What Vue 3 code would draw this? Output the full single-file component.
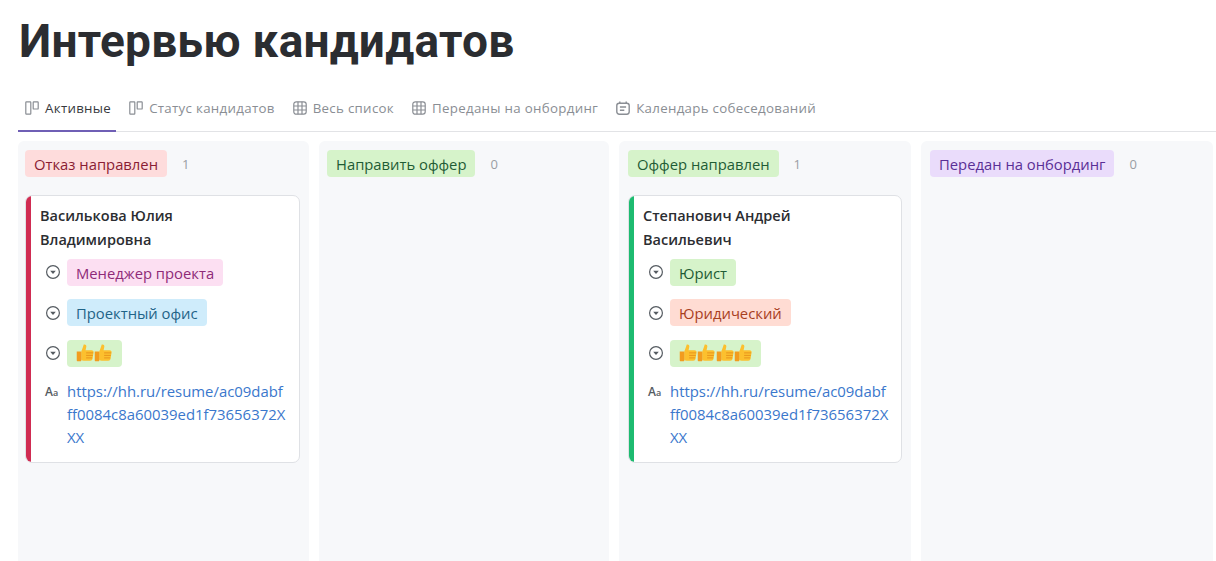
<script setup>
const tabs = [
  { label: 'Активные', icon: 'board', active: true },
  { label: 'Статус кандидатов', icon: 'board' },
  { label: 'Весь список', icon: 'table' },
  { label: 'Переданы на онбординг', icon: 'table' },
  { label: 'Календарь собеседований', icon: 'calendar' },
]
const url = 'https://hh.ru/resume/ac09dabfff0084c8a60039ed1f73656372XXX'
const columns = [
  {
    title: 'Отказ направлен', tone: 'red', count: 1,
    cards: [{ name: 'Василькова Юлия Владимировна', bar: 'bar-red', role: ['Менеджер проекта', 'pink'], dept: ['Проектный офис', 'blue'], thumbs: 2 }],
  },
  { title: 'Направить оффер', tone: 'green', count: 0, cards: [] },
  {
    title: 'Оффер направлен', tone: 'green', count: 1,
    cards: [{ name: 'Степанович Андрей Васильевич', bar: 'bar-green', role: ['Юрист', 'green'], dept: ['Юридический', 'salmon'], thumbs: 4 }],
  },
  { title: 'Передан на онбординг', tone: 'purple', count: 0, cards: [] },
]
</script>

<template>
  <div class="page">
    <h1 class="title">Интервью кандидатов</h1>
    <nav class="tabs">
      <div v-for="t in tabs" :key="t.label" class="tab" :class="{ active: t.active }">
        <svg class="tab-icon" viewBox="0 0 14 14" fill="none" stroke="currentColor" stroke-width="1.2">
          <template v-if="t.icon === 'board'">
            <rect x="0.8" y="0.8" width="5" height="12.4" rx="0.6" />
            <rect x="8.2" y="0.8" width="5" height="7.2" rx="0.6" />
          </template>
          <template v-else-if="t.icon === 'table'">
            <rect x="0.8" y="0.8" width="12.4" height="12.4" rx="2.4" />
            <path d="M0.8 5h12.4M0.8 9h12.4M5 0.8v12.4M9 0.8v12.4" />
          </template>
          <template v-else>
            <rect x="0.8" y="2.2" width="12.4" height="11" rx="2.4" stroke-width="1.4" />
            <path d="M3.8 0.6v2.4M10.2 0.6v2.4M3.9 6h6.2M3.9 9.2h4.4" stroke-width="1.4" />
          </template>
        </svg>
        <span>{{ t.label }}</span>
      </div>
    </nav>
    <div class="board">
      <section v-for="c in columns" :key="c.title" class="column">
        <header class="col-head">
          <span class="tag" :class="c.tone">{{ c.title }}</span>
          <span class="count">{{ c.count }}</span>
        </header>
        <article v-for="card in c.cards" :key="card.name" class="card">
          <div class="bar" :class="card.bar"></div>
          <div class="card-body">
            <div class="name">{{ card.name }}</div>
            <div v-for="row in [card.role, card.dept]" :key="row[0]" class="row">
              <svg class="select-icon" viewBox="0 0 16 16" fill="none">
                <circle cx="8" cy="8" r="6.4" stroke="#555b61" stroke-width="1.2" />
                <path d="M5.2 6.8h5.6L8 10z" fill="#555b61" />
              </svg>
              <span class="tag" :class="row[1]">{{ row[0] }}</span>
            </div>
            <div class="row">
              <svg class="select-icon" viewBox="0 0 16 16" fill="none">
                <circle cx="8" cy="8" r="6.4" stroke="#555b61" stroke-width="1.2" />
                <path d="M5.2 6.8h5.6L8 10z" fill="#555b61" />
              </svg>
              <span class="tag green thumbs">
                <svg v-for="n in card.thumbs" :key="n" class="thumb" viewBox="0 0 18 18">
                  <path d="M7.6 0.6c1.5-.5 2.7.4 2.6 1.9-.1 1.5-.6 2.6-.8 3.7h6c1.5 0 2.2 1 2 2.2l-1 6.4c-.2 1.3-1 2-2.3 2H7.6c-1 0-1.9-.4-2.5-1.1V7.4c1-2 1.8-4.3 2.5-6.8z" fill="#fcc02e" />
                  <path d="M0.6 7.4h3.6c.6 0 1 .4 1 1v7.8c0 .6-.4 1-1 1H1.6c-.6 0-1-.4-1-1z" fill="#f29c1f" />
                  <path d="M10 8.9h7M10 11.4h6.6M10 13.9h6" stroke="#e8941c" stroke-width="1" fill="none" />
                </svg>
              </span>
            </div>
            <div class="row link-row">
              <span class="aa">A<small>a</small></span>
              <a class="link">{{ url }}</a>
            </div>
          </div>
        </article>
      </section>
    </div>
  </div>
</template>

<style>
html, body { margin: 0; background: #fff; overflow: hidden; }
</style>

<style scoped>
.page {
  height: 561px;
  padding: 0 3px 0 18px;
  box-sizing: border-box;
  font-family: "Open Sans", "Noto Sans", sans-serif;
  color: #2b2d31;
  overflow: hidden;
}
.title {
  margin: 0;
  padding: 11px 0 0 1px;
  height: 75px;
  box-sizing: border-box;
  font-family: Roboto, "Open Sans", sans-serif;
  font-size: 46px;
  line-height: 60px;
  font-weight: 700;
  letter-spacing: 0.27px;
}
.tabs {
  display: flex;
  height: 45px;
  margin-right: -3px;
  padding-bottom: 2px;
  box-sizing: border-box;
  border-bottom: 1px solid #e2e3e6;
  margin-top: 12px;
}
.tab {
  display: flex;
  align-items: center;
  gap: 6px;
  padding: 0 5px 0 7px;
  margin-right: 6px;
  font-size: 13.3px;
  letter-spacing: 0.3px;
  color: #8a8e94;
  position: relative;
}
.tab.active { color: #37393d; }
.tab.active::after {
  content: "";
  position: absolute;
  left: 0;
  right: 0;
  bottom: -3px;
  height: 2px;
  background: #6f5fb5;
}
.tab-icon { width: 14px; height: 14px; flex: none; color: #8a8e94; }
.board {
  display: grid;
  grid-template-columns: 301px 300px 302px 292px;
  margin-top: 9px;
}
.column {
  height: 430px;
  margin-right: 10px;
  background: #f7f8fa;
  border-radius: 6px;
  padding: 9px;
  box-sizing: border-box;
}
.column:nth-child(1) { padding-left: 7px; }
.column:nth-child(2) { padding-left: 8px; }
.column:nth-child(4) { margin-right: 0; }
.col-head {
  display: flex;
  align-items: center;
  height: 27px;
  gap: 15px;
}
.tag {
  display: inline-flex;
  align-items: center;
  box-sizing: border-box;
  height: 27px;
  padding: 1px 9px 0;
  border-radius: 4px;
  font-size: 14.8px;
  white-space: nowrap;
}
.count { font-size: 13px; color: #9a9ea4; padding-top: 1px; }
.red { background: #fedcdc; color: #8a1c33; }
.green { background: #d6f3ca; color: #1f5c35; }
.purple { background: #eadcfb; color: #5a2f96; }
.pink { background: #fcdff2; color: #8e2a78; }
.blue { background: #cfecfb; color: #1f6488; }
.salmon { background: #ffdcd3; color: #a8401f; }
.card {
  display: flex;
  margin-top: 18px;
  background: #fff;
  border: 1px solid #dfe1e5;
  border-radius: 7px;
  overflow: hidden;
  height: 268px;
  box-sizing: border-box;
}
.bar { width: 5px; flex: none; }
.bar-red { background: #d02c52; }
.bar-green { background: #1dbb70; }
.card-body { flex: 1; min-width: 0; padding: 8px 8px 8px 9px; }
.name {
  font-size: 14.5px;
  font-weight: 600;
  line-height: 24px;
  width: 170px;
  margin-bottom: 6.5px;
  color: #2b2d31;
}
.row {
  display: flex;
  align-items: center;
  gap: 6px;
  padding-left: 5px;
  margin-bottom: 13.5px;
}
.select-icon { width: 16px; height: 16px; flex: none; }
.thumbs { gap: 0; padding: 0 9px; }
.thumb { width: 18.3px; height: 18px; flex: none; }
.link-row { align-items: flex-start; margin-bottom: 0; margin-top: 0; }
.aa {
  width: 16px;
  flex: none;
  font-size: 12px;
  font-weight: 600;
  line-height: 24px;
  color: #555b61;
}
.aa small { font-size: 9px; }
.link {
  color: #3a77cc;
  font-size: 14.9px;
  line-height: 23px;
  width: 220px;
  word-break: break-all;
}
</style>
